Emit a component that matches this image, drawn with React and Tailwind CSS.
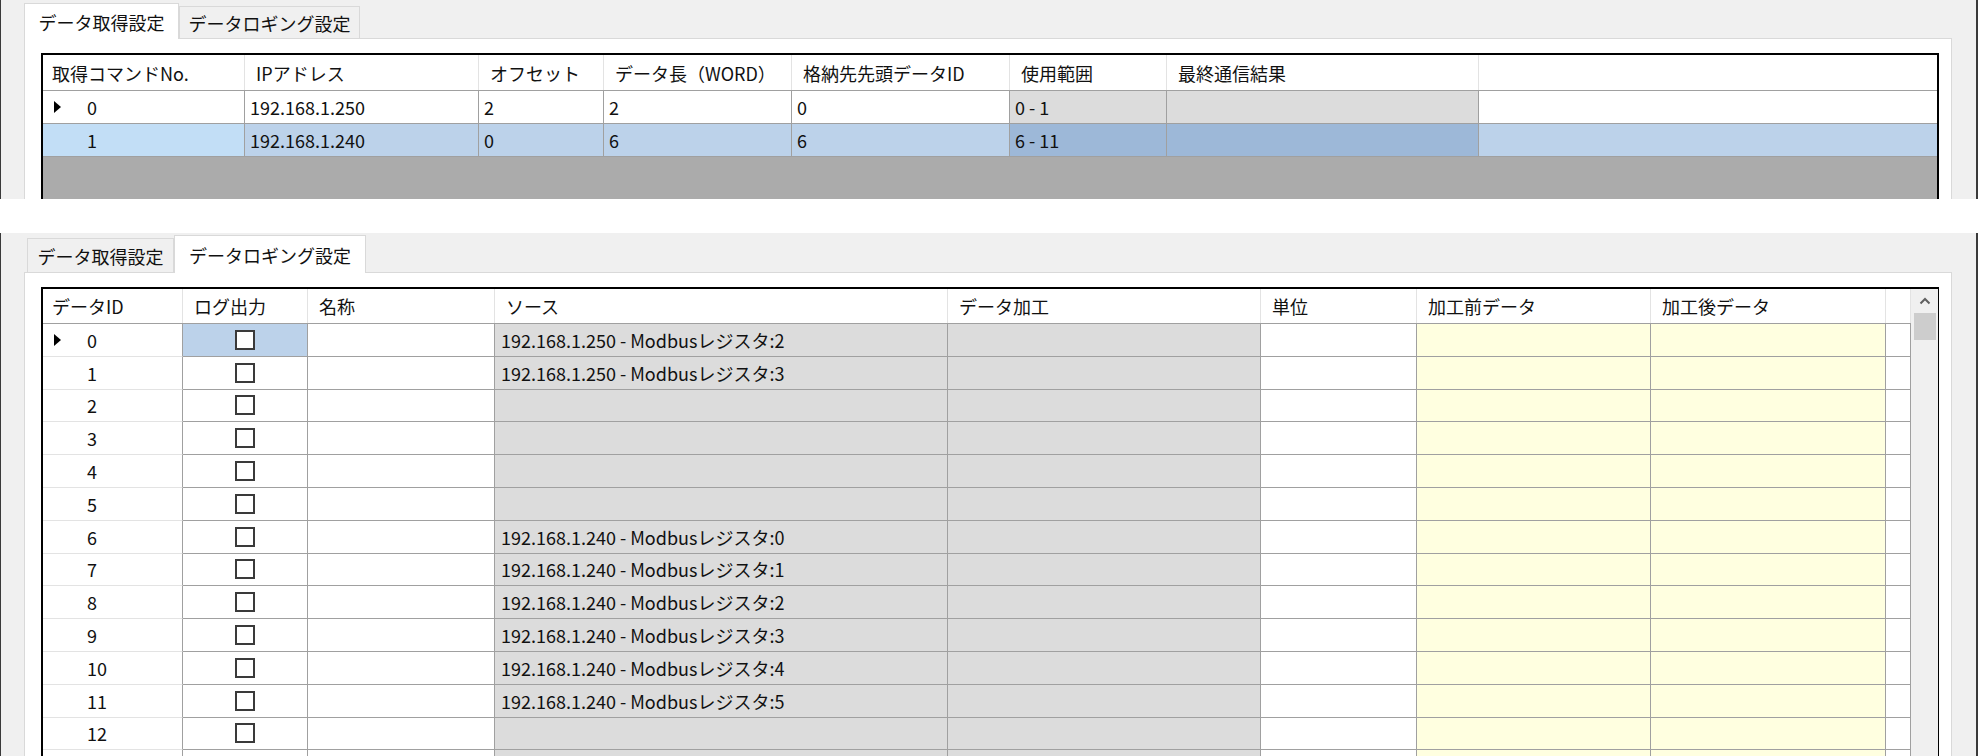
import React from 'react';

const TOP_COLS = [202, 234, 125, 188, 218, 157, 312];
const TOP_HEAD = ['取得コマンドNo.', 'IPアドレス', 'オフセット', 'データ長（WORD）', '格納先先頭データID', '使用範囲', '最終通信結果'];
const TOP_ROWS = [
  ['0', '192.168.1.250', '2', '2', '0', '0 - 1', ''],
  ['1', '192.168.1.240', '0', '6', '6', '6 - 11', ''],
];

const LOG_COLS = [140, 125, 187, 453, 313, 156, 234, 235, 25];
const LOG_HEAD = ['データID', 'ログ出力', '名称', 'ソース', 'データ加工', '単位', '加工前データ', '加工後データ', ''];
const LOG_BG = ['bg-white', 'bg-white', 'bg-white', 'bg-[#dcdcdc]', 'bg-[#dcdcdc]', 'bg-white', 'bg-[#ffffe0]', 'bg-[#ffffe0]', 'bg-white'];

const sources = {
  0: '192.168.1.250 - Modbusレジスタ:2',
  1: '192.168.1.250 - Modbusレジスタ:3',
  6: '192.168.1.240 - Modbusレジスタ:0',
  7: '192.168.1.240 - Modbusレジスタ:1',
  8: '192.168.1.240 - Modbusレジスタ:2',
  9: '192.168.1.240 - Modbusレジスタ:3',
  10: '192.168.1.240 - Modbusレジスタ:4',
  11: '192.168.1.240 - Modbusレジスタ:5',
};

function Arrow() {
  return (
    <svg width="9" height="12" viewBox="0 0 9 12">
      <polygon points="1,0 8,6 1,12" fill="#000" />
    </svg>
  );
}

function Tabs({ items, active, padLeft, height, padTop }) {
  return (
    <div className={`flex items-end ${padLeft} ${height} ${padTop} box-content`}>
      {items.map((t, i) =>
        i === active ? (
          <div key={t.label} style={{ width: t.w }} className="relative z-10 -mb-px h-[calc(100%+1px)] bg-white border border-b-0 border-[#d9d9d9] flex items-center justify-center">
            <span className="text-[18px] leading-none">{t.label}</span>
          </div>
        ) : (
          <div key={t.label} style={{ width: t.w, height: t.h }} className="bg-[#f0f0f0] border border-b-0 border-[#d9d9d9] flex items-center justify-center">
            <span className="text-[18px] leading-none">{t.label}</span>
          </div>
        )
      )}
    </div>
  );
}

function AcquireGrid() {
  return (
    <div className="w-[1898px] h-[200px] border-2 border-black bg-[#ababab] flex flex-col">
      <div className="flex h-[36px] bg-white border-b border-[#a0a0a0]">
        {TOP_HEAD.map((h, i) => (
          <div key={h} style={{ width: TOP_COLS[i] }} className={`shrink-0 flex items-center border-r border-[#e3e3e3] ${i === 0 ? 'pl-[9px]' : 'pl-[11px]'}`}>
            {h}
          </div>
        ))}
        <div className="flex-1" />
      </div>
      {TOP_ROWS.map((r, ri) => {
        const sel = ri === 1;
        return (
          <div key={ri} className={`flex h-[33px] border-b border-[#a0a0a0] ${sel ? 'bg-[#bcd2ea]' : 'bg-white'}`}>
            {r.map((v, ci) => {
              let bg = sel ? 'bg-[#bcd2ea]' : 'bg-white';
              if (ci === 0) bg = sel ? 'bg-[#c2def6]' : 'bg-white';
              if (ci >= 5) bg = sel ? 'bg-[#9db8d8]' : 'bg-[#dcdcdc]';
              return ci === 0 ? (
                <div key={ci} style={{ width: TOP_COLS[ci] }} className={`shrink-0 flex items-center pl-[10px] border-r border-[#a0a0a0] ${bg}`}>
                  <div className="w-[34px] flex items-center">{ri === 0 && <Arrow />}</div>
                  {v}
                </div>
              ) : (
                <div key={ci} style={{ width: TOP_COLS[ci] }} className={`shrink-0 flex items-center pl-[5px] border-r border-[#a0a0a0] ${bg}`}>
                  {v}
                </div>
              );
            })}
            <div className="flex-1" />
          </div>
        );
      })}
    </div>
  );
}

function Checkbox() {
  return <div className="w-[20px] h-[20px] border-2 border-[#3a3a3a] bg-white" />;
}

function LoggingGrid() {
  // 13 visible rows plus the top edge of the next one
  const rows = Array.from({ length: 14 }, (_, i) => i);
  return (
    <div className="w-[1898px] border-2 border-black bg-white flex">
      <div className="flex flex-col">
        <div className="flex h-[35px] border-b border-[#a0a0a0]">
          {LOG_HEAD.map((h, i) => (
            <div key={i} style={{ width: LOG_COLS[i] }} className={`shrink-0 flex items-center border-r border-[#e3e3e3] ${i === 0 ? 'pl-[9px]' : 'pl-[11px]'}`}>
              {h}
            </div>
          ))}
        </div>
        {rows.map((ri) => (
          <div key={ri} className="flex h-[32.8px]">
            {LOG_COLS.map((w, ci) => {
              if (ci === 0) {
                return (
                  <div key={ci} style={{ width: w }} className="shrink-0 flex items-center pl-[10px] border-r border-[#a0a0a0] border-b border-b-[#e3e3e3]">
                    <div className="w-[34px] flex items-center">{ri === 0 && <Arrow />}</div>
                    {ri < 13 && ri}
                  </div>
                );
              }
              const bg = ci === 1 && ri === 0 ? 'bg-[#bcd2ea]' : LOG_BG[ci];
              return (
                <div key={ci} style={{ width: w }} className={`shrink-0 flex items-center border-r border-b border-[#a0a0a0] ${bg} ${ci === 1 ? 'justify-center' : 'pl-[6px]'}`}>
                  {ci === 1 && ri < 13 && <Checkbox />}
                  {ci === 3 && sources[ri]}
                </div>
              );
            })}
          </div>
        ))}
      </div>
      <div className="w-[27px] shrink-0 bg-[#f0f0f0] flex flex-col items-center">
        <div className="h-[24px] w-full flex items-center justify-center">
          <svg width="12" height="8" viewBox="0 0 12 8">
            <path d="M1.5 6.5 L6 2 L10.5 6.5" fill="none" stroke="#606060" strokeWidth="2" />
          </svg>
        </div>
        <div className="w-[22px] h-[27px] bg-[#cdcdcd]" />
      </div>
    </div>
  );
}

export default function App() {
  return (
    <div className="w-[1978px] h-[756px] overflow-hidden bg-white text-[18px] leading-none text-[#111] font-['Noto_Sans_CJK_JP','Noto_Sans',sans-serif]">
      <div className="h-[199px] overflow-hidden bg-[#f0f0f0] border-l border-r-2 border-[#3a3a3a]">
        <Tabs
          items={[
            { label: 'データ取得設定', w: 155 },
            { label: 'データロギング設定', w: 181, h: 32 },
          ]}
          active={0}
          padLeft="pl-[23px]"
          height="h-[35px]"
          padTop="pt-[3px]"
        />
        <div className="ml-[23px] w-[1928px] h-[300px] bg-white border border-[#d9d9d9] pt-[14px] pl-[16px]">
          <AcquireGrid />
        </div>
      </div>
      <div className="h-[34px] bg-white" />
      <div className="h-[523px] overflow-hidden bg-[#f0f0f0] border-l border-r-2 border-[#3a3a3a]">
        <Tabs
          items={[
            { label: 'データ取得設定', w: 147, h: 34 },
            { label: 'データロギング設定', w: 192 },
          ]}
          active={1}
          padLeft="pl-[26px]"
          height="h-[37px]"
          padTop="pt-[2px]"
        />
        <div className="ml-[23px] w-[1928px] h-[600px] bg-white border border-[#d9d9d9] pt-[14px] pl-[16px]">
          <LoggingGrid />
        </div>
      </div>
    </div>
  );
}
